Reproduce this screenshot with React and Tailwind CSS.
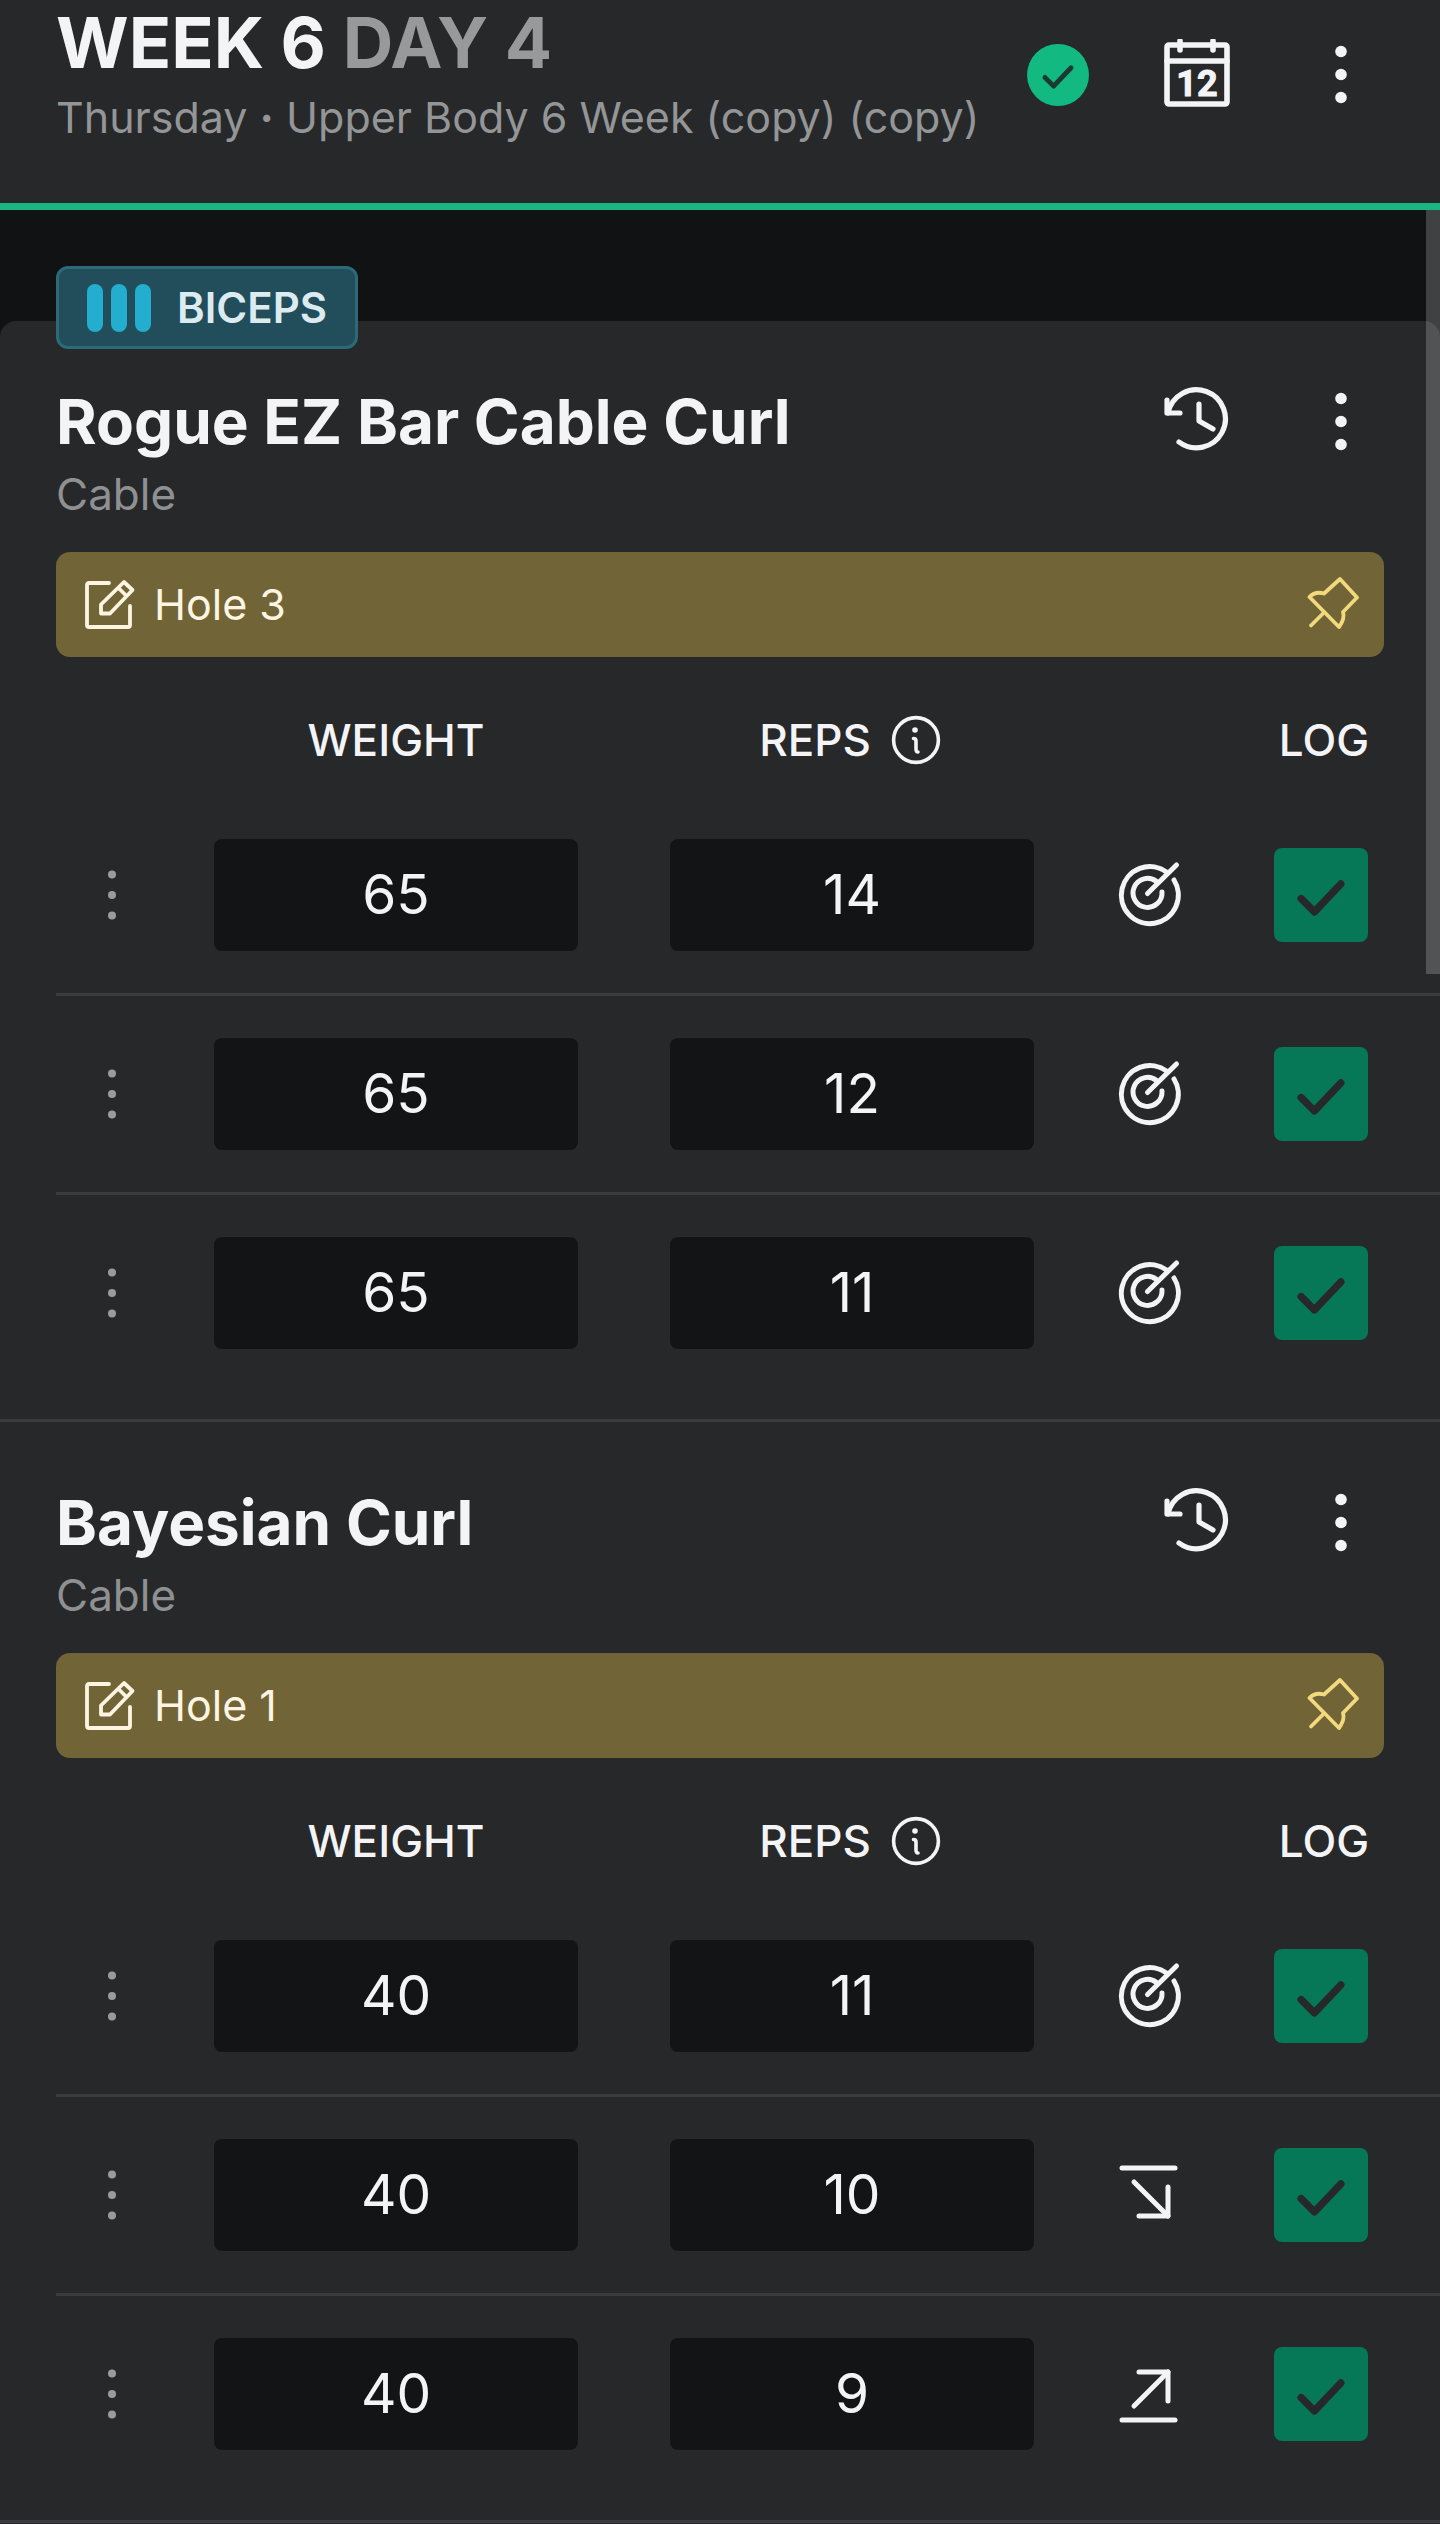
import { useState } from "react";

const initialExercises = [
  {
    id: 1,
    name: "Rogue EZ Bar Cable Curl",
    type: "Cable",
    note: "Hole 3",
    sets: [
      { id: 1, weight: "65", reps: "14", trend: "target", logged: true },
      { id: 2, weight: "65", reps: "12", trend: "target", logged: true },
      { id: 3, weight: "65", reps: "11", trend: "target", logged: true },
    ],
  },
  {
    id: 2,
    name: "Bayesian Curl",
    type: "Cable",
    note: "Hole 1",
    sets: [
      { id: 1, weight: "40", reps: "11", trend: "target", logged: true },
      { id: 2, weight: "40", reps: "10", trend: "down", logged: true },
      { id: 3, weight: "40", reps: "9", trend: "up", logged: true },
    ],
  },
];

// Shared props for the line icons.
const line = {
  fill: "none",
  stroke: "currentColor",
  strokeLinecap: "round",
  strokeLinejoin: "round",
  "aria-hidden": true,
};

const CalendarIcon = () => (
  <svg viewBox="0 0 72 72" className="size-[72px]" {...line} strokeWidth="5.6">
    <rect x="6" y="6" width="60" height="59" rx="2" />
    <path d="M6 22H66M19 2V11M52 2V11" />
    <text
      x="36"
      y="57"
      textAnchor="middle"
      fill="currentColor"
      strokeWidth="1"
      className="font-['Roboto',sans-serif] text-[36px] font-bold"
    >
      12
    </text>
  </svg>
);

const DotsIcon = () => (
  <svg
    viewBox="0 0 72 72"
    className="size-[72px]"
    fill="currentColor"
    aria-hidden="true"
  >
    <circle cx="36" cy="12.5" r="5.8" />
    <circle cx="36" cy="35.5" r="5.8" />
    <circle cx="36" cy="58.5" r="5.8" />
  </svg>
);

const HandleIcon = () => (
  <svg
    viewBox="0 0 12 52"
    className="h-[52px] w-3"
    fill="currentColor"
    aria-hidden="true"
  >
    <circle cx="6" cy="5.5" r="4" />
    <circle cx="6" cy="26" r="4" />
    <circle cx="6" cy="46.5" r="4" />
  </svg>
);

const HistoryIcon = () => (
  <svg viewBox="0 0 72 72" className="size-[72px]" {...line} strokeWidth="5.2">
    <path d="M18 56A29 29 0 1 0 7 27" />
    <path d="M6 14V27H19M38 18V35L52 43" />
  </svg>
);

const EditIcon = () => (
  <svg
    viewBox="0 0 52 52"
    className="size-[52px] shrink-0"
    {...line}
    strokeWidth="3.8"
  >
    <path d="M25 4H5Q3 4 3 6V46Q3 48 5 48H44Q46 48 46 46V27" />
    <path d="M40 3L48.5 11L26 34.5H17V25.5ZM34.5 9L42.5 17" />
  </svg>
);

const PinIcon = () => (
  <svg viewBox="0 0 56 56" className="size-14" {...line} strokeWidth="3.8">
    <path d="M36 2L53 20.5L39 35Q41 42 35 50L5.5 20Q11 14 20 16.5Z" />
    <path d="M20 35.5L7 48.5" />
  </svg>
);

const InfoIcon = () => (
  <svg viewBox="0 0 50 50" className="size-[50px]" {...line} strokeWidth="3.6">
    <circle cx="25" cy="25" r="22.4" />
    <circle cx="24" cy="15" r="2.8" fill="currentColor" stroke="none" />
    <path d="M22.5 23.5Q25 23.5 25 26V34Q25 37 27 37" />
  </svg>
);

const CheckIcon = ({ className, strokeWidth }) => (
  <svg
    viewBox="0 0 64 64"
    className={className}
    {...line}
    strokeWidth={strokeWidth}
  >
    <path d="M18.5 34.500L27.500 43.5L45.5 24.5" />
  </svg>
);

const trendIcons = {
  target: {
    label: "Target met",
    paths: [
      "M60 21A28.500 28.500 0 1 1 52.500 13",
      "M48 33A14.500 14.500 0 1 1 42.500 22.500",
      "M33.500 34.500L62.500 6",
    ],
  },
  down: {
    label: "Below target",
    paths: ["M8 9H61", "M20 23L54 57", "M54 28V57H25"],
  },
  up: {
    label: "Above target",
    paths: ["M8 62H61", "M20 48L54 14", "M54 43V14H25"],
  },
};

const TrendIcon = ({ trend }) => (
  <svg viewBox="0 0 72 72" className="size-[72px]" {...line} strokeWidth="5">
    {trendIcons[trend].paths.map((d) => (
      <path key={d} d={d} />
    ))}
  </svg>
);

const Header = () => (
  <header className="flex items-center justify-between border-b-7 border-[#19b684] pt-px pr-[63px] pb-[54px] pl-14">
    <div className="min-w-0 whitespace-nowrap">
      <h1 className="text-[70px] leading-[84px] font-bold">
        WEEK 6 <span className="text-[#98999b]">DAY 4</span>
      </h1>
      <p className="text-[43px] leading-[64px] text-[#949597]">
        Thursday <span className="font-bold">·</span> Upper Body 6 Week (copy)
        (copy)
      </p>
    </div>
    <div className="flex shrink-0 items-center gap-[72px]">
      <button
        aria-label="Workout complete"
        className="size-[62px] rounded-full bg-[#12b981] text-[#1b3a31]"
      >
        <CheckIcon className="size-[62px]" strokeWidth="5" />
      </button>
      <button aria-label="Calendar">
        <CalendarIcon />
      </button>
      <button aria-label="Workout menu">
        <DotsIcon />
      </button>
    </div>
  </header>
);

const SetRow = ({ set, last, onChange }) => {
  const cell = last
    ? "pt-[42px] pb-[70px]"
    : "border-b-3 border-[#3a3b3e] py-[42px]";
  const field =
    "block h-28 w-full rounded-lg bg-[#131416] pb-0.5 text-center text-[55px] outline-none";

  return (
    <tr>
      <td className={cell}>
        <button
          aria-label={`Set ${set.id} options`}
          className="flex w-full justify-center text-[#9a9b9d]"
        >
          <HandleIcon />
        </button>
      </td>
      <td className={`${cell} px-[46px]`}>
        <input
          aria-label={`Set ${set.id} weight`}
          inputMode="decimal"
          className={field}
          value={set.weight}
          onChange={(e) => onChange("weight", e.target.value)}
        />
      </td>
      <td className={`${cell} px-[46px]`}>
        <input
          aria-label={`Set ${set.id} reps`}
          inputMode="numeric"
          className={field}
          value={set.reps}
          onChange={(e) => onChange("reps", e.target.value)}
        />
      </td>
      <td className={cell}>
        <button
          aria-label={trendIcons[set.trend].label}
          className="flex w-full justify-center"
        >
          <TrendIcon trend={set.trend} />
        </button>
      </td>
      <td className={`${cell} pr-[18px]`}>
        <label className="mx-auto grid size-[94px]">
          <input
            type="checkbox"
            aria-label={`Log set ${set.id}`}
            className="col-start-1 row-start-1 size-[94px] appearance-none rounded-lg bg-[#131416] checked:bg-[#067857]"
            checked={set.logged}
            onChange={(e) => onChange("logged", e.target.checked)}
          />
          {set.logged && (
            <CheckIcon
              className="pointer-events-none col-start-1 row-start-1 size-[94px] text-[#26282a]"
              strokeWidth="5"
            />
          )}
        </label>
      </td>
    </tr>
  );
};

const Exercise = ({ exercise, onSetChange }) => (
  <section className="border-b-3 border-[#3a3b3e] bg-[#26282a] pt-[61px] first:rounded-t-2xl">
    <div className="flex items-start justify-between pr-[63px] pl-14">
      <div>
        <h2 className="text-[62px] leading-[80px] font-bold">
          {exercise.name}
        </h2>
        <p className="text-[44px] leading-[64px] text-[#8f9092]">
          {exercise.type}
        </p>
      </div>
      <div className="flex gap-[72px] pt-1">
        <button aria-label={`${exercise.name} history`}>
          <HistoryIcon />
        </button>
        <button aria-label={`${exercise.name} menu`}>
          <DotsIcon />
        </button>
      </div>
    </div>

    <div className="mx-14 mt-[26px] flex h-[105px] items-center justify-between rounded-[14px] bg-[#716437] pr-6 pl-7">
      <button className="flex items-center gap-[18px] text-[43px] text-[#fdf5e2]">
        <EditIcon />
        {exercise.note}
      </button>
      <button aria-label="Unpin note" className="text-[#f2d97d]">
        <PinIcon />
      </button>
    </div>

    <div className="pl-14">
      <table className="w-full table-fixed border-separate border-spacing-0">
        <thead>
          <tr className="text-[44px] leading-[54px]">
            <td className="w-28" />
            <th className="pt-14 pb-[30px] font-medium">WEIGHT</th>
            <th className="pt-14 pr-1 pb-[30px] font-medium">
              <div className="flex items-center justify-center gap-5">
                REPS
                <button aria-label="About reps">
                  <InfoIcon />
                </button>
              </div>
            </th>
            <td className="w-[140px]" />
            <th className="w-[220px] pt-14 pr-3 pb-[30px] font-medium">LOG</th>
          </tr>
        </thead>
        <tbody>
          {exercise.sets.map((set, idx) => (
            <SetRow
              key={set.id}
              set={set}
              last={idx === exercise.sets.length - 1}
              onChange={(field, value) =>
                onSetChange(exercise.id, set.id, field, value)
              }
            />
          ))}
        </tbody>
      </table>
    </div>
  </section>
);

function App() {
  const [exercises, setExercises] = useState(initialExercises);

  const updateSet = (exerciseId, setId, field, value) => {
    setExercises((prev) =>
      prev.map((exercise) =>
        exercise.id !== exerciseId
          ? exercise
          : {
              ...exercise,
              sets: exercise.sets.map((set) =>
                set.id === setId ? { ...set, [field]: value } : set
              ),
            }
      )
    );
  };

  return (
    <div className="min-h-screen bg-[#26282a] font-['Inter',sans-serif] text-[#f4f4f6]">
      <Header />

      <main className="relative bg-[#111214]">
        {/* Muscle group badge, overlaps the first card */}
        <div className="flex px-14 pt-14">
          <div className="relative z-10 -mb-7 flex h-[83px] items-center gap-[26px] rounded-xl border-3 border-[#2d6a78] bg-[#214e5a] px-7">
            <div className="flex gap-2">
              <span className="h-12 w-4 rounded-full bg-[#23adcf]" />
              <span className="h-12 w-4 rounded-full bg-[#23adcf]" />
              <span className="h-12 w-4 rounded-full bg-[#23adcf]" />
            </div>
            <span className="text-[42px] font-semibold text-[#dcebf0]">
              BICEPS
            </span>
          </div>
        </div>

        <div>
          {exercises.map((exercise) => (
            <Exercise
              key={exercise.id}
              exercise={exercise}
              onSetChange={updateSet}
            />
          ))}
        </div>

        {/* Scroll thumb */}
        <div className="pointer-events-none absolute top-0 right-0 h-[764px] w-[14px] bg-white/20" />
      </main>
    </div>
  );
}

export default App;
